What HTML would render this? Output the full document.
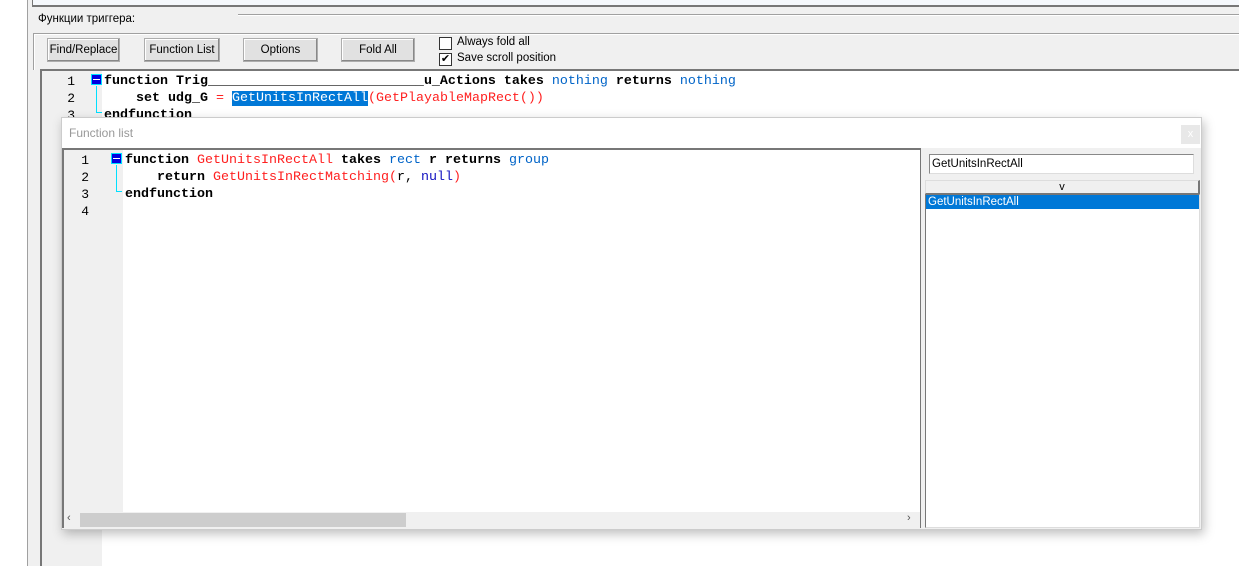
<!DOCTYPE html>
<html><head><meta charset="utf-8"><style>
*{margin:0;padding:0;box-sizing:border-box}
body{width:1239px;height:566px;background:#f0f0f0;position:relative;overflow:hidden;font-family:"Liberation Sans",sans-serif;font-size:11px;color:#000}
.a{position:absolute}
.btn{position:absolute;top:38px;height:24px;background:#e1e1e1;border:1px solid #adadad;box-shadow:inset -1px -1px 0 #888,inset 1px 1px 0 #fff;text-align:center;line-height:22px;font-size:11.5px}
.code{font-family:"Liberation Mono",monospace;font-size:13.33px;font-weight:bold;line-height:17px;white-space:pre}
.ln{font-family:"Liberation Mono",monospace;font-size:13px;line-height:17px;text-align:right}
.b{color:#0064c8;font-weight:normal}.r{color:#ff2020;font-weight:normal}.n{font-weight:normal}
.fold{position:absolute;width:11px;height:11px;background:#0000e0;border:1px solid #00e0ff}
.fold:after{content:"";position:absolute;left:1px;top:4px;width:7px;height:1px;background:#fff}
.cb{position:absolute;width:13px;height:13px;border:1px solid #333;background:#fff;font-size:11px;line-height:11px;text-align:center}
</style></head><body>
<div class="a" style="left:0;top:0;width:27px;height:566px;background:#fff"></div>
<div class="a" style="left:27px;top:0;width:1px;height:566px;background:#a0a0a0"></div>
<div class="a" style="left:32px;top:0;width:1207px;height:7px;background:#f5f8fc;border-left:1px solid #777;border-bottom:2px solid #777"></div>
<div class="a" style="left:238px;top:14px;width:1001px;height:2px;border-top:1px solid #a0a0a0;border-bottom:1px solid #fff"></div>
<div class="a" style="left:38px;top:13px;font-size:11.5px">Функции триггера:</div>
<div class="a" style="left:33px;top:33px;width:1206px;height:37px;border-top:1px solid #a0a0a0;border-left:1px solid #a0a0a0;box-shadow:inset 1px 1px 0 #fff"></div>
<div class="btn" style="left:47px;width:73px">Find/Replace</div>
<div class="btn" style="left:144px;width:76px">Function List</div>
<div class="btn" style="left:243px;width:75px">Options</div>
<div class="btn" style="left:341px;width:74px">Fold All</div>
<div class="cb" style="left:439px;top:37px"></div>
<div class="a" style="left:457px;top:36px;font-size:11.5px">Always fold all</div>
<div class="cb" style="left:439px;top:53px">✔</div>
<div class="a" style="left:457px;top:52px;font-size:11.5px">Save scroll position</div>
<div class="a" style="left:40px;top:69px;width:1199px;height:497px;background:#fff;border-top:2px solid #777;border-left:2px solid #777"></div>
<div class="a" style="left:42px;top:71px;width:60px;height:495px;background:#f0f0f0"></div>
<div class="a ln" style="left:42px;top:73px;width:33px">1<br>2<br>3</div>
<div class="fold" style="left:91px;top:74px"></div>
<div class="a" style="left:96px;top:86px;width:1px;height:26px;background:#00e0ff"></div>
<div class="a" style="left:96px;top:112px;width:6px;height:1px;background:#00e0ff"></div>
<div class="a code" style="left:104px;top:73px">function Trig<span class="n">___________________________</span>u_Actions takes <span class="b">nothing</span> returns <span class="b">nothing</span>
    set udg_G <span class="r">=</span> <span style="background:#0078d7;color:#fff;font-weight:normal">GetUnitsInRectAll</span><span class="r">(GetPlayableMapRect())</span>
endfunction</div>
<div class="a" style="left:61px;top:117px;width:1141px;height:413px;background:#fff;border:1px solid #ccc;box-shadow:2px 4px 10px rgba(0,0,0,.25)"></div>
<div class="a" style="left:69px;top:126px;color:#999;font-size:12px">Function list</div>
<div class="a" style="left:1181px;top:125px;width:19px;height:19px;background:#e8e8e8;color:#fff;text-align:center;line-height:18px;font-size:11px">x</div>
<div class="a" style="left:62px;top:148px;width:1139px;height:381px;background:#f0f0f0"></div>
<div class="a" style="left:62px;top:148px;width:858px;height:380px;background:#fff;border-top:2px solid #777;border-left:2px solid #777"></div>
<div class="a" style="left:64px;top:150px;width:59px;height:362px;background:#f0f0f0"></div>
<div class="a ln" style="left:64px;top:152px;width:25px">1<br>2<br>3<br>4</div>
<div class="fold" style="left:111px;top:153px"></div>
<div class="a" style="left:116px;top:165px;width:1px;height:26px;background:#00e0ff"></div>
<div class="a" style="left:116px;top:191px;width:6px;height:1px;background:#00e0ff"></div>
<div class="a code" style="left:125px;top:152px">function <span class="r">GetUnitsInRectAll</span> takes <span class="b">rect</span> r returns <span class="b">group</span>
    return <span class="r">GetUnitsInRectMatching(</span><span class="n">r,</span> <span class="b" style="color:#1010c0">null</span><span class="r">)</span>
endfunction</div>
<div class="a" style="left:64px;top:512px;width:856px;height:16px;background:#f0f0f0"></div>
<div class="a" style="left:80px;top:513px;width:326px;height:14px;background:#cdcdcd"></div>
<div class="a" style="left:67px;top:512px;font-size:11px;color:#555">‹</div>
<div class="a" style="left:907px;top:512px;font-size:11px;color:#555">›</div>
<div class="a" style="left:920px;top:148px;width:1px;height:380px;background:#777"></div>
<div class="a" style="left:929px;top:154px;width:265px;height:20px;background:#fff;border:1px solid #888;border-right-color:#ddd;border-bottom-color:#ddd;padding-left:2px;line-height:18px;font-size:11.5px">GetUnitsInRectAll</div>
<div class="a" style="left:925px;top:180px;width:275px;height:14px;background:#f0f0f0;border:1px solid #ddd;border-right:2px solid #777;border-bottom:1px solid #777;text-align:center;line-height:12px;font-size:11px">v</div>
<div class="a" style="left:925px;top:194px;width:275px;height:334px;background:#fff;border:1px solid #777;border-right-color:#ddd;border-bottom-color:#ddd"></div>
<div class="a" style="left:926px;top:195px;width:273px;height:14px;background:#0078d7;color:#fff;padding-left:2px;line-height:14px;font-size:11.5px">GetUnitsInRectAll</div>
</body></html>
